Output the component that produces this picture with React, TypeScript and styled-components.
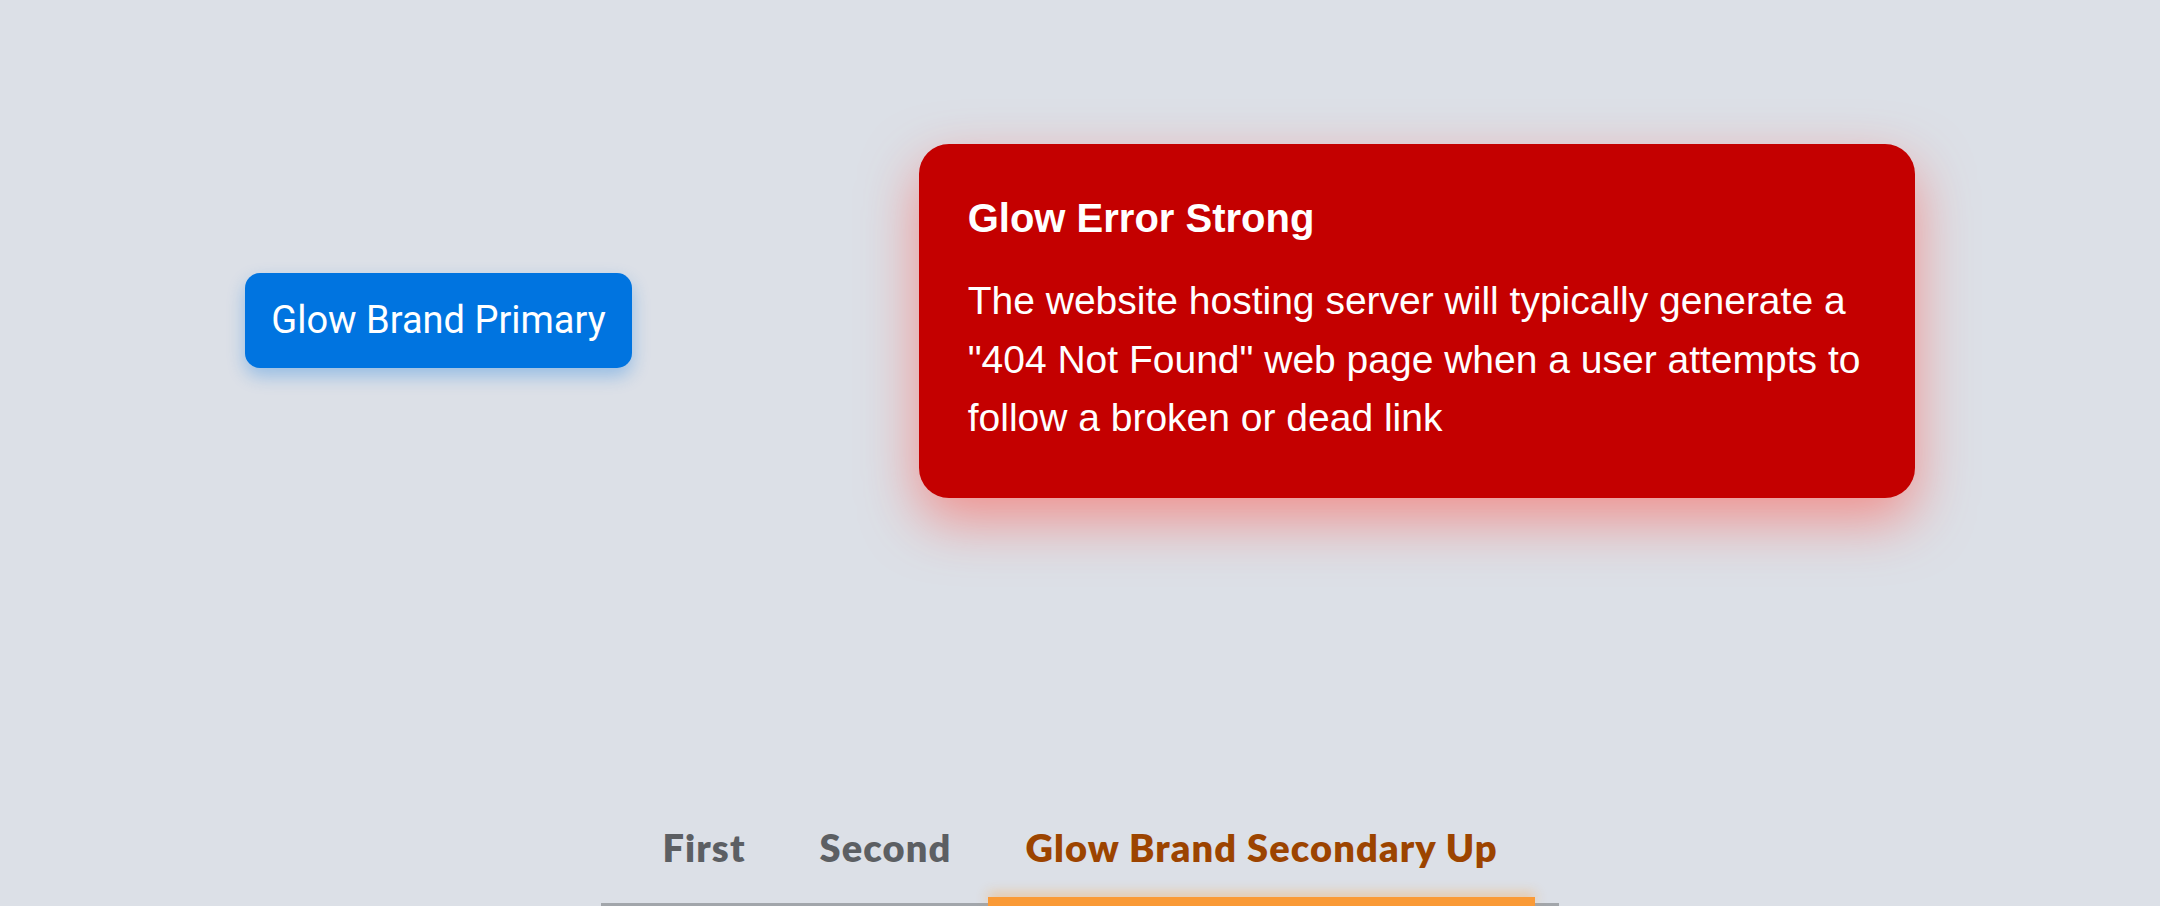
import React, { useState } from 'react';
import styled, { createGlobalStyle } from 'styled-components';

const GlobalStyle = createGlobalStyle`
    html, body {
        margin: 0;
        padding: 0;
        height: 100%;
        overflow: hidden;
        background: #dce0e7;
    }
`;

const Page = styled.div`
    min-height: 100vh;
    background: #dce0e7;
    font-family: "Liberation Sans", Arial, sans-serif;
`;

const Showcase = styled.section`
    display: flex;
    justify-content: center;
    align-items: center;
    gap: 287px;
    padding-top: 144px;
`;

const BrandButton = styled.button`
    padding: 24px 26px;
    border: none;
    border-radius: 15px;
    background: #0074e0;
    color: #ffffff;
    font-family: Roboto, "Liberation Sans", sans-serif;
    font-size: 38px;
    line-height: 47px;
    box-shadow: 0 8px 18px rgba(0, 116, 224, 0.32);
    cursor: pointer;
`;

const ErrorCard = styled.div`
    width: 996px;
    box-sizing: border-box;
    padding: 50px 48px 50px 49px;
    border-radius: 30px;
    background: #c40000;
    color: #ffffff;
    box-shadow: 0 22px 56px rgba(255, 90, 80, 0.6);
`;

const CardTitle = styled.h3`
    margin: 0 0 30px;
    font-size: 40px;
    line-height: 48px;
    font-weight: 700;
`;

const CardText = styled.p`
    margin: 0;
    font-size: 39px;
    line-height: 58.5px;
`;

const TabsWrap = styled.nav`
    display: flex;
    justify-content: center;
    margin-top: 326px;
`;

const TabList = styled.div`
    display: flex;
    padding: 0 24px;
    border-bottom: 3px solid #a2a6ab;
`;

const Tab = styled.button<{ $active?: boolean }>`
    position: relative;
    padding: 0 37px 33px;
    border: none;
    background: none;
    font-family: Lato, "Liberation Sans", sans-serif;
    font-weight: 800;
    font-size: 38px;
    line-height: 46px;
    letter-spacing: 1.1px;
    color: ${(p) => (p.$active ? '#9c4400' : '#5c5f63')};
    cursor: pointer;

    &::after {
        content: '';
        display: ${(p) => (p.$active ? 'block' : 'none')};
        position: absolute;
        left: 0;
        right: 0;
        bottom: -3px;
        height: 9px;
        background: #fa9a36;
        box-shadow: 0 -4px 12px rgba(250, 160, 60, 0.45);
    }
`;

const tabs = ['First', 'Second', 'Glow Brand Secondary Up'];

const App: React.FC = () => {
    const [active, setActive] = useState(2);

    return (
        <Page>
            <GlobalStyle />
            <Showcase>
                <BrandButton>Glow Brand Primary</BrandButton>
                <ErrorCard>
                    <CardTitle>Glow Error Strong</CardTitle>
                    <CardText>
                        The website hosting server will typically generate a "404 Not Found" web page
                        when a user attempts to follow a broken or dead link
                    </CardText>
                </ErrorCard>
            </Showcase>
            <TabsWrap>
                <TabList>
                    {tabs.map((label, i) => (
                        <Tab key={label} $active={i === active} onClick={() => setActive(i)}>
                            {label}
                        </Tab>
                    ))}
                </TabList>
            </TabsWrap>
        </Page>
    );
};

export default App;
